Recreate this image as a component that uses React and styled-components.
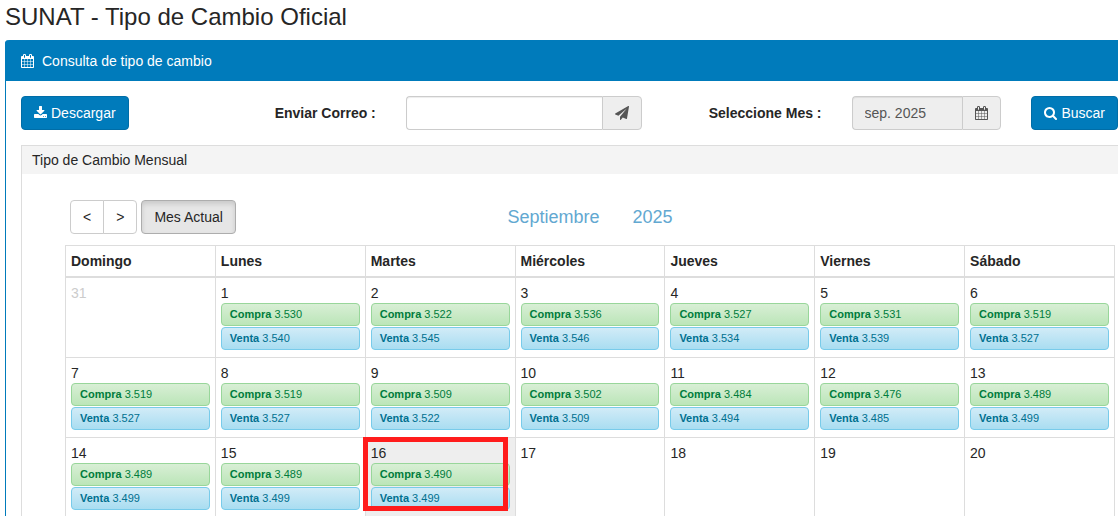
import React from "react";
import styled, { createGlobalStyle, css } from "styled-components";

const GlobalStyle = createGlobalStyle`
  *, *::before, *::after { box-sizing: border-box; }
  html { scrollbar-width: none; }
  body {
    margin: 0;
    background: #fff;
    color: #262626;
    font-family: "Liberation Sans", Arial, sans-serif;
    font-size: 14px;
    line-height: 20px;
  }
  button, input { font: inherit; color: inherit; }
`;

const ICONS = {
  calendar:
    "M192 1664h288v-288h-288v288zm352 0h320v-288h-320v288zm-352-352h288v-320h-288v320zm352 0h320v-320h-320v320zm-352-384h288v-288h-288v288zm736 736h320v-288h-320v288zm-384-736h320v-288h-320v288zm768 736h288v-288h-288v288zm-384-352h320v-320h-320v320zm-352-864v-288q0-13-9.5-22.5t-22.5-9.5h-64q-13 0-22.5 9.5t-9.5 22.5v288q0 13 9.5 22.5t22.5 9.5h64q13 0 22.5-9.5t9.5-22.5zm736 864h288v-320h-288v320zm-384-384h320v-288h-320v288zm384 0h288v-288h-288v288zm32-480v-288q0-13-9.5-22.5t-22.5-9.5h-64q-13 0-22.5 9.5t-9.5 22.5v288q0 13 9.5 22.5t22.5 9.5h64q13 0 22.5-9.5t9.5-22.5zm384-64v1280q0 52-38 90t-90 38h-1408q-52 0-90-38t-38-90v-1280q0-52 38-90t90-38h128v-96q0-66 47-113t113-47h64q66 0 113 47t47 113v96h384v-96q0-66 47-113t113-47h64q66 0 113 47t47 113v96h128q52 0 90 38t38 90z",
  download:
    "M1344 1344q0-26-19-45t-45-19-45 19-19 45 19 45 45 19 45-19 19-45zm256 0q0-26-19-45t-45-19-45 19-19 45 19 45 45 19 45-19 19-45zm128-224v320q0 40-28 68t-68 28h-1472q-40 0-68-28t-28-68v-320q0-40 28-68t68-28h465l135 136q58 56 136 56t136-56l136-136h464q40 0 68 28t28 68zm-325-569q17 41-14 70l-448 448q-18 19-45 19t-45-19l-448-448q-31-29-14-70 17-39 59-39h256v-448q0-26 19-45t45-19h256q26 0 45 19t19 45v448h256q42 0 59 39z",
  search:
    "M1216 832q0-185-131.5-316.5t-316.5-131.5-316.5 131.5-131.5 316.5 131.5 316.5 316.5 131.5 316.5-131.5 131.5-316.5zm512 832q0 52-38 90t-90 38q-54 0-90-38l-343-342q-179 124-399 124-143 0-273.5-55.5t-225-150-150-225-55.5-273.5 55.5-273.5 150-225 225-150 273.5-55.5 273.5 55.5 225 150 150 225 55.5 273.5q0 220-124 399l343 343q37 37 37 90z",
  send:
    "M1764 11q33 24 27 64l-256 1536q-5 29-32 45-14 8-31 8-11 0-24-5l-453-185-242 295q-18 23-49 23-13 0-22-4-19-7-30.5-23.5t-11.5-36.5v-349l864-1059-1069 925-395-162q-37-14-40-55-2-40 32-59l1664-960q15-9 32-9 20 0 36 11z",
};

const Svg = styled.svg`
  width: ${(p) => (p.$wide ? "14px" : "13px")};
  height: 14px;
  flex: none;
  fill: currentColor;
`;

const Icon = ({ name, wide }) => (
  <Svg $wide={wide} viewBox={wide ? "0 0 1792 1792" : "64 0 1664 1792"} aria-hidden="true">
    <path d={ICONS[name]} />
  </Svg>
);

const Page = styled.main`
  height: 100vh;
  overflow: hidden;
  padding-left: 5px;
`;

const PageTitle = styled.h1`
  margin: 0;
  padding: 3px 0 9px;
  font-size: 24px;
  font-weight: 400;
  line-height: 28px;
`;

const Panel = styled.section`
  border-left: 1px solid #007bbb;
  border-top-left-radius: 4px;
`;

const PanelHeader = styled.h2`
  display: flex;
  align-items: center;
  gap: 8px;
  margin: 0 0 0 -1px;
  padding: 11px 16px 10px;
  border-top-left-radius: 4px;
  background: #007bbb;
  color: #fff;
  font-size: 14px;
  font-weight: 400;
  line-height: 20px;
`;

const PanelBody = styled.div`
  padding: 15px 0 0 15px;
`;

const FilterForm = styled.form`
  display: grid;
  grid-template-columns:
    minmax(0, 175fr) minmax(0, 150fr) minmax(0, 236fr)
    minmax(0, 150fr) minmax(0, 150fr) auto;
  column-gap: 30px;
  align-items: center;
  margin-bottom: 15px;
`;

const FieldLabel = styled.label`
  font-weight: 700;
  text-align: right;
`;

const PrimaryButton = styled.button`
  display: inline-flex;
  align-items: center;
  justify-self: start;
  gap: 4px;
  height: 34px;
  padding: 0 12px;
  border: 1px solid #006da7;
  border-radius: 4px;
  background: #007bbb;
  color: #fff;
`;

const InputGroup = styled.div`
  display: flex;
  height: 34px;
`;

const TextInput = styled.input`
  flex: 1;
  width: 100%;
  min-width: 0;
  padding: 0 12px;
  border: 1px solid #ccc;
  border-right: 0;
  border-radius: 4px 0 0 4px;
  background: ${(p) => (p.readOnly ? "#eee" : "#fff")};
  box-shadow: inset 0 1px 1px rgba(0, 0, 0, 0.075);
  color: #555;
`;

const AddonButton = styled.button`
  display: flex;
  flex: none;
  align-items: center;
  justify-content: center;
  width: ${(p) => (p.$wide ? "40px" : "39px")};
  padding: 0;
  border: 1px solid #ccc;
  border-radius: 0 4px 4px 0;
  background: #eee;
  color: #555;
`;

const Card = styled.section`
  border: solid #ddd;
  border-width: 1px 0 0 1px;
`;

const CardHeader = styled.h3`
  margin: 0;
  padding: 4px 10px;
  background: #f4f4f4;
  font-size: 14px;
  font-weight: 400;
  line-height: 20px;
`;

const CardBody = styled.div`
  padding: 26px 3px 0 43px;
`;

const CalendarBar = styled.div`
  display: grid;
  grid-template-columns: 1fr auto 1fr;
  align-items: center;
  margin-bottom: 11px;
`;

const NavButtons = styled.div`
  display: flex;
  padding-left: 5px;
`;

const NavButton = styled.button`
  height: 34px;
  padding: 0 12px;
  border: 1px solid #ccc;
  border-radius: ${(p) => p.$radius || "4px"};
  background: #fff;
  & + & { margin-left: -1px; }
  ${(p) =>
    p.$active &&
    css`
      && { margin-left: 4px; }
      border-color: #adadad;
      background: #e6e6e6;
      box-shadow: inset 0 3px 5px rgba(0, 0, 0, 0.125);
    `}
`;

const MonthTitle = styled.h4`
  display: flex;
  gap: 33px;
  margin: 0;
  color: #62a8d1;
  font-size: 18px;
  font-weight: 400;
  line-height: 20px;
`;

const CalendarTable = styled.table`
  width: 100%;
  table-layout: fixed;
  border-collapse: collapse;
`;

const DayHead = styled.th`
  height: 31px;
  padding: 5px;
  border: 1px solid #ddd;
  border-bottom-width: 2px;
  text-align: left;
`;

const DayCell = styled.td`
  position: relative;
  height: 80px;
  padding: 5px 5px 0;
  border: 1px solid #ddd;
  background: ${(p) => (p.$today ? "#eee" : "#fff")};
  color: ${(p) => (p.$muted ? "#ccc" : "inherit")};
  vertical-align: top;
`;

const Rate = styled.div`
  height: 23px;
  padding: 0 8px;
  border: 1px solid ${(p) => (p.$sell ? "#78cbea" : "#98d69a")};
  border-radius: 4px;
  background: ${(p) =>
    p.$sell
      ? "linear-gradient(#d1ebf7, #a9ddf1)"
      : "linear-gradient(#d8efd5, #bbe5b8)"};
  color: ${(p) => (p.$sell ? "#00708f" : "#007c3c")};
  font-size: 11px;
  line-height: 21px;
  & + & { margin-top: 1px; }
`;

const Highlight = styled.div`
  position: absolute;
  top: -1px;
  left: -3px;
  width: calc(100% - 4px);
  height: 74px;
  border: 5px solid #ff1c1c;
  pointer-events: none;
`;

const DAYS = ["Domingo", "Lunes", "Martes", "Miércoles", "Jueves", "Viernes", "Sábado"];

const WEEKS = [
  [
    { day: 31, muted: true },
    { day: 1, buy: "3.530", sell: "3.540" },
    { day: 2, buy: "3.522", sell: "3.545" },
    { day: 3, buy: "3.536", sell: "3.546" },
    { day: 4, buy: "3.527", sell: "3.534" },
    { day: 5, buy: "3.531", sell: "3.539" },
    { day: 6, buy: "3.519", sell: "3.527" },
  ],
  [
    { day: 7, buy: "3.519", sell: "3.527" },
    { day: 8, buy: "3.519", sell: "3.527" },
    { day: 9, buy: "3.509", sell: "3.522" },
    { day: 10, buy: "3.502", sell: "3.509" },
    { day: 11, buy: "3.484", sell: "3.494" },
    { day: 12, buy: "3.476", sell: "3.485" },
    { day: 13, buy: "3.489", sell: "3.499" },
  ],
  [
    { day: 14, buy: "3.489", sell: "3.499" },
    { day: 15, buy: "3.489", sell: "3.499" },
    { day: 16, buy: "3.490", sell: "3.499", today: true },
    { day: 17 },
    { day: 18 },
    { day: 19 },
    { day: 20 },
  ],
];

const Day = ({ day, buy, sell, muted, today }) => (
  <DayCell $muted={muted} $today={today}>
    <div>{day}</div>
    {buy && (
      <Rate>
        <strong>Compra</strong> {buy}
      </Rate>
    )}
    {sell && (
      <Rate $sell>
        <strong>Venta</strong> {sell}
      </Rate>
    )}
    {today && <Highlight />}
  </DayCell>
);

export default function App() {
  return (
    <>
      <GlobalStyle />
      <Page>
        <PageTitle>SUNAT - Tipo de Cambio Oficial</PageTitle>
        <Panel>
          <PanelHeader>
            <Icon name="calendar" />
            Consulta de tipo de cambio
          </PanelHeader>
          <PanelBody>
            <FilterForm onSubmit={(e) => e.preventDefault()}>
              <PrimaryButton type="button">
                <Icon name="download" />
                Descargar
              </PrimaryButton>
              <FieldLabel htmlFor="correo">Enviar Correo :</FieldLabel>
              <InputGroup>
                <TextInput id="correo" type="email" />
                <AddonButton $wide type="button" aria-label="Enviar">
                  <Icon name="send" wide />
                </AddonButton>
              </InputGroup>
              <FieldLabel htmlFor="mes">Seleccione Mes :</FieldLabel>
              <InputGroup>
                <TextInput id="mes" type="text" readOnly value="sep. 2025" />
                <AddonButton type="button" aria-label="Abrir calendario">
                  <Icon name="calendar" />
                </AddonButton>
              </InputGroup>
              <PrimaryButton type="submit">
                <Icon name="search" />
                Buscar
              </PrimaryButton>
            </FilterForm>
            <Card>
              <CardHeader>Tipo de Cambio Mensual</CardHeader>
              <CardBody>
                <CalendarBar>
                  <NavButtons>
                    <NavButton type="button" $radius="4px 0 0 4px">&lt;</NavButton>
                    <NavButton type="button" $radius="0 4px 4px 0">&gt;</NavButton>
                    <NavButton type="button" $active>Mes Actual</NavButton>
                  </NavButtons>
                  <MonthTitle>
                    <span>Septiembre</span>
                    <span>2025</span>
                  </MonthTitle>
                </CalendarBar>
                <CalendarTable>
                  <thead>
                    <tr>
                      {DAYS.map((d) => (
                        <DayHead key={d} scope="col">{d}</DayHead>
                      ))}
                    </tr>
                  </thead>
                  <tbody>
                    {WEEKS.map((week) => (
                      <tr key={week[0].day}>
                        {week.map((d) => (
                          <Day key={d.day} {...d} />
                        ))}
                      </tr>
                    ))}
                  </tbody>
                </CalendarTable>
              </CardBody>
            </Card>
          </PanelBody>
        </Panel>
      </Page>
    </>
  );
}
